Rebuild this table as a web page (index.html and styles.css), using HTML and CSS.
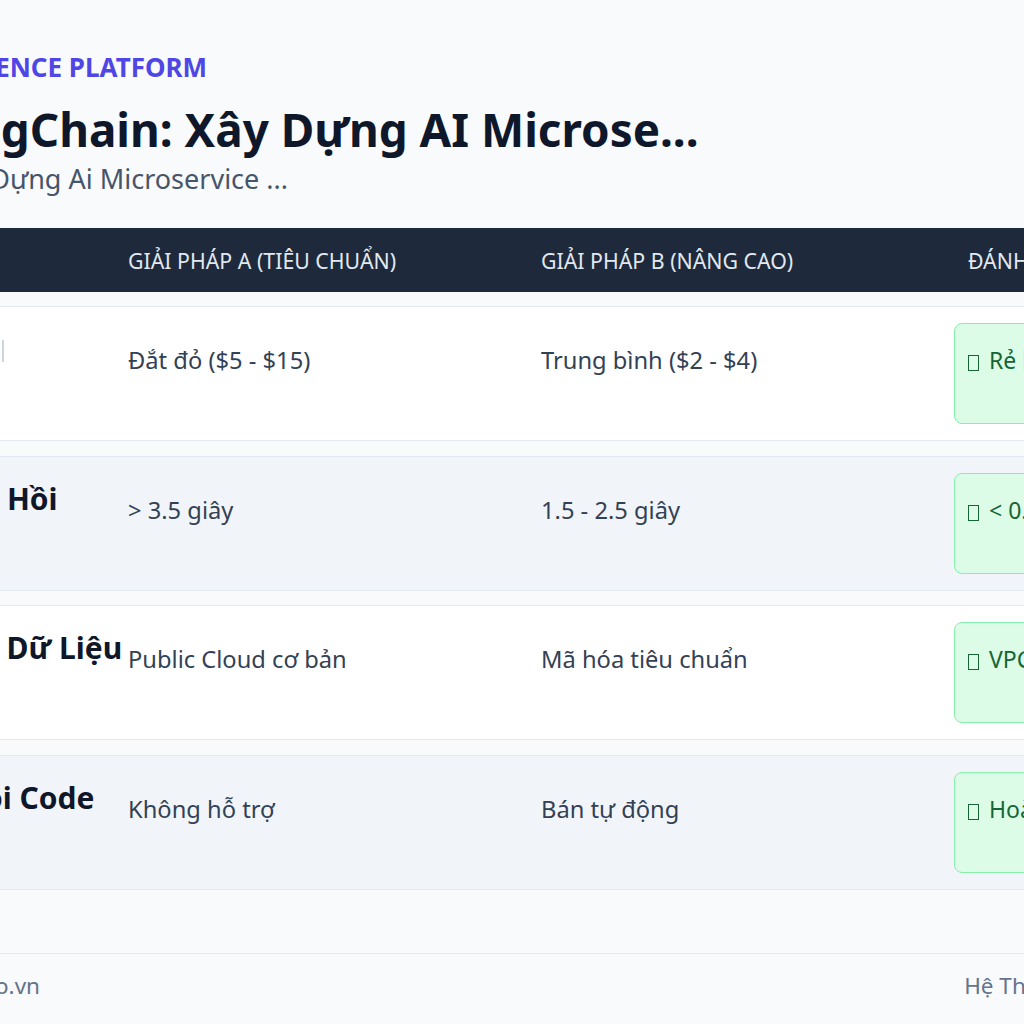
FILE: index.html
```html
<!DOCTYPE html>
<html lang="vi">
<head>
<meta charset="utf-8">
<title>LangChain: Xây Dựng AI Microservice</title>
<link rel="stylesheet" href="styles.css">
</head>
<body>
<div class="page">
  <div class="container">
    <header class="hero">
      <div class="eyebrow">INFERENCE PLATFORM</div>
      <h1 class="title">LangChain: Xây Dựng AI Microse...</h1>
      <p class="subtitle">– Xây Dựng Ai Microservice ...</p>
    </header>

    <div class="table">
      <div class="thead">
        <div class="th">Tiêu chí</div>
        <div class="th">Giải pháp A (Tiêu chuẩn)</div>
        <div class="th">Giải pháp B (Nâng cao)</div>
        <div class="th">Đánh giá</div>
      </div>

      <div class="row">
        <div class="label">Chi Phí<span class="ghost"></span></div>
        <div class="cell">Đắt đỏ ($5 - $15)</div>
        <div class="cell">Trung bình ($2 - $4)</div>
        <div class="cell cell-badge"><div class="badge"><span class="tofu"></span>Rẻ hơn 60%</div></div>
      </div>

      <div class="row row-alt">
        <div class="label">Độ Phản Hồi</div>
        <div class="cell">&gt; 3.5 giây</div>
        <div class="cell">1.5 - 2.5 giây</div>
        <div class="cell cell-badge"><div class="badge"><span class="tofu"></span>&lt; 0.8 giây</div></div>
      </div>

      <div class="row">
        <div class="label">Bảo Mật Dữ Liệu</div>
        <div class="cell">Public Cloud cơ bản</div>
        <div class="cell">Mã hóa tiêu chuẩn</div>
        <div class="cell cell-badge"><div class="badge"><span class="tofu"></span>VPC riêng</div></div>
      </div>

      <div class="row row-alt">
        <div class="label">Xử Lý Lỗi Code</div>
        <div class="cell">Không hỗ trợ</div>
        <div class="cell">Bán tự động</div>
        <div class="cell cell-badge"><div class="badge"><span class="tofu"></span>Hoàn toàn tự động</div></div>
      </div>
    </div>

    <footer class="footer">
      <span>aidemo.vn</span>
      <span>Hệ Thống AI</span>
    </footer>
  </div>
</div>
</body>
</html>
```

FILE: styles.css
```css
html, body {
  margin: 0;
  padding: 0;
}

body {
  background: #f8fafc;
  overflow: hidden;
  font-family: "Noto Sans", "Open Sans", sans-serif;
  font-stretch: 87.5%;
  color: #334155;
}

.page {
  display: flex;
  justify-content: center;
  width: 1024px;
  height: 1024px;
}

.container {
  flex: 0 0 1330px;
  width: 1330px;
  padding-top: 52px;
}

.hero {
  padding: 0 71px;
}

.eyebrow {
  font-size: 26px;
  line-height: 31px;
  font-weight: 700;
  color: #4f46e5;
  white-space: nowrap;
}

.title {
  margin: 19px 0 0;
  font-size: 45.8px;
  line-height: 54px;
  font-weight: 700;
  color: #0f172a;
  white-space: nowrap;
}

.subtitle {
  margin: 6px 0 0;
  font-size: 27px;
  line-height: 34px;
  color: #475569;
  white-space: nowrap;
}

.table {
  margin-top: 32px;
  display: flex;
  flex-direction: column;
  gap: 14.5px;
}

.thead,
.row {
  display: grid;
  grid-template-columns: 253px 413px 427px 1fr;
}

.thead {
  background: #1e293b;
  height: 64px;
  align-items: center;
  margin-bottom: -0.5px;
}

.th {
  padding-left: 28px;
  font-size: 21.3px;
  color: #e2e8f0;
  text-transform: uppercase;
  white-space: nowrap;
  overflow: hidden;
}

.row {
  box-sizing: border-box;
  height: 135px;
  background: #ffffff;
  border-top: 1px solid #e2e8f0;
  border-bottom: 1px solid #e2e8f0;
  padding: 16px 0;
  align-items: start;
}

.row-alt {
  background: #f1f5f9;
}

.label {
  padding: 8px 0 0 28px;
  font-size: 30px;
  line-height: 36px;
  font-weight: 700;
  color: #0f172a;
  white-space: nowrap;
}

.ghost {
  display: inline-block;
  width: 20px;
  height: 22px;
  margin-left: 6px;
  border-right: 2px solid #cbd5e1;
  box-sizing: border-box;
  vertical-align: -2px;
}

.cell {
  padding: 22px 0 0 28px;
  font-size: 23.7px;
  line-height: 30px;
  color: #334155;
  white-space: nowrap;
}

.cell-badge {
  padding: 0 0 0 14px;
  min-width: 0;
}

.badge {
  box-sizing: border-box;
  height: 101px;
  padding: 21px 14px 0 13px;
  background: #dcfce7;
  border: 1px solid #86efac;
  border-radius: 8px;
  color: #166534;
  font-size: 23px;
  line-height: 30px;
  white-space: nowrap;
  overflow: hidden;
}

.tofu {
  display: inline-block;
  box-sizing: border-box;
  width: 11px;
  height: 16px;
  border: 1.5px solid currentColor;
  margin-right: 10px;
  vertical-align: -2px;
}

.footer {
  margin-top: 63px;
  border-top: 1px solid #e2e8f0;
  padding: 0 82px;
  height: 64px;
  display: flex;
  justify-content: space-between;
  align-items: center;
  font-size: 22.5px;
  color: #64748b;
  white-space: nowrap;
}
```
